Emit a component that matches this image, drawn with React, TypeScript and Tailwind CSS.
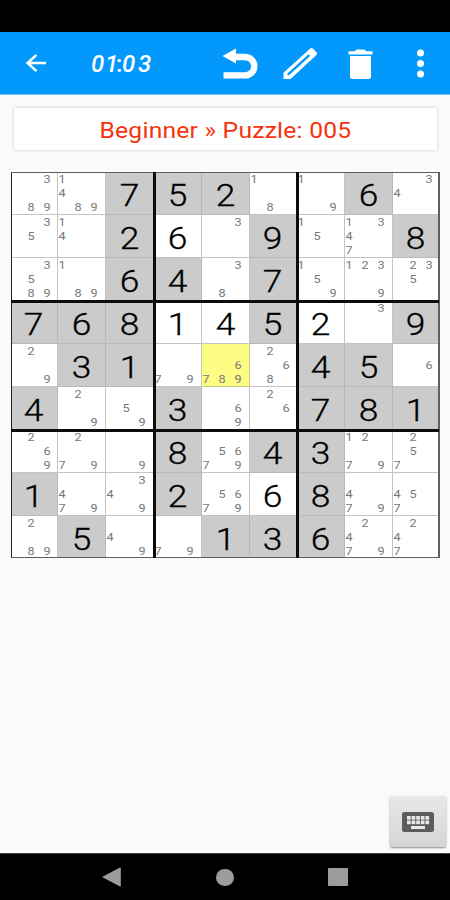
// Cell codes: "g7" is a given, "w6" an entered digit, "n389" pencil notes, "y…" notes in the selected cell.
const ROWS = [
  ["n389", "n1489", "g7", "g5", "g2", "n18", "n19", "g6", "n34"],
  ["n35", "n14", "g2", "w6", "n3", "g9", "n15", "n1347", "g8"],
  ["n3589", "n189", "g6", "g4", "n38", "g7", "n159", "n1239", "n235"],
  ["g7", "g6", "g8", "w1", "w4", "g5", "w2", "n3", "g9"],
  ["n29", "g3", "g1", "n79", "y6789", "n268", "g4", "g5", "n6"],
  ["g4", "n29", "n59", "g3", "n69", "n26", "g7", "g8", "g1"],
  ["n269", "n279", "n9", "g8", "n5679", "g4", "g3", "n1279", "n257"],
  ["g1", "n479", "n349", "g2", "n5679", "w6", "g8", "n479", "n457"],
  ["n289", "g5", "n49", "n79", "g1", "g3", "g6", "n2479", "n247"],
];

const BACKGROUNDS: Record<string, string> = {
  g: "bg-[#cbcbcb] border-[#b9b9b9]",
  w: "bg-white border-[#c4c4c4]",
  n: "bg-white border-[#c4c4c4]",
  y: "bg-[#fdfd83] border-[#c9c98a]",
};

function Cell({ code }: { code: string }) {
  const kind = code[0];
  const value = code.slice(1);
  const isDigit = kind === "g" || kind === "w";
  return (
    <div className={`overflow-hidden border-r border-b ${BACKGROUNDS[kind]}`}>
      {isDigit ? (
        <div className="flex h-full w-full items-center justify-center pt-[5px]">
          <span className="scale-x-[1.14] text-[31px] font-light leading-none text-black [-webkit-text-stroke:0.3px_black]">
            {value}
          </span>
        </div>
      ) : (
        <div className="-ml-[4px] grid w-[48px] grid-cols-[16px_16px_16px] grid-rows-[14px_14px_14px] pt-px">
          {["1", "2", "3", "4", "5", "6", "7", "8", "9"].map((n) => (
            <span
              key={n}
              className="flex scale-x-[1.15] items-center justify-center text-[11px] leading-[14px] text-[#777]"
            >
              {value.includes(n) ? n : ""}
            </span>
          ))}
        </div>
      )}
    </div>
  );
}

function Board() {
  return (
    <div className="relative ml-[11px] mt-[21px] h-[387px] w-[429px]">
      <div className="grid grid-cols-[47px_48px_48px_48px_48px_47px_48px_48px_47px] grid-rows-[43px_43px_43px_43px_43px_43px_43px_43px_42px]">
        {ROWS.flatMap((row, r) => row.map((code, c) => <Cell key={`${r}-${c}`} code={code} />))}
      </div>
      <div className="absolute left-0 top-0 h-[386px] w-[429px] border border-r-2 border-[#606060] border-l-[#222]" />
      <div className="absolute left-[142px] top-0 h-[386px] w-[3px] bg-[#0c0c0c]" />
      <div className="absolute left-[285px] top-0 h-[386px] w-[3px] bg-[#0c0c0c]" />
      <div className="absolute left-0 top-[127.5px] h-[3px] w-[428px] bg-[#0c0c0c]" />
      <div className="absolute left-0 top-[257px] h-[3px] w-[428px] bg-[#0c0c0c]" />
    </div>
  );
}

function Toolbar() {
  return (
    <header className="flex h-[63px] items-center border-b border-[#7cc4f8] bg-[#0399fc] text-white">
      <svg className="ml-[24px] h-[24px] w-[24px]" viewBox="0 0 24 24" fill="none" stroke="currentColor" strokeWidth="2.5">
        <path d="M22 12H4M12.5 3.8L3.5 12l9 8.2" />
      </svg>
      <div className="ml-[43px] flex w-[66px] items-center pt-px text-[24px] font-medium italic leading-none">
        <span className="w-[14px]">0</span>
        <span className="w-[11px] tracking-[-3px]">1</span>
        <span className="w-[6px] not-italic">:</span>
        <span className="w-[16px]">0</span>
        <span>3</span>
      </div>
      <svg className="ml-[64px] h-[34px] w-[38px]" viewBox="221 46 38 34">
        <path d="M233 57h12a9.3 9.2 0 0 1 0 18.4H223.500" fill="none" stroke="currentColor" strokeWidth="6.4" />
        <path d="M222.500 56L236 48.500V63.500Z" fill="currentColor" />
      </svg>
      <svg className="ml-[23px] h-[34px] w-[36px]" viewBox="282 46 36 34">
        <path
          d="M283.500 79v-6.300L310 48.700q1.500-1.200 3 0l3.700 3.800q1 1.200-.3 2.400L290.500 79Z"
          fill="currentColor"
        />
        <path d="M288.500 74.200L308.800 55.700" stroke="#0399fc" strokeWidth="2.4" strokeLinecap="round" />
      </svg>
      <svg className="ml-[29px] h-[34px] w-[26px]" viewBox="347 46 26 34" fill="currentColor">
        <path d="M348.500 51.200h6.200l2-1.700h7.600l2 1.700h6.200v3.300h-24zM350 56h21v20.500q0 2.500-2.500 2.500h-16q-2.500 0-2.500-2.500z" />
      </svg>
      <svg className="ml-[43px] h-[34px] w-[9px]" viewBox="416 46 9 34" fill="currentColor">
        <circle cx="420.500" cy="53" r="3.500" />
        <circle cx="420.500" cy="63.500" r="3.500" />
        <circle cx="420.500" cy="74" r="3.500" />
      </svg>
    </header>
  );
}

function KeyboardButton() {
  return (
    <button className="mr-[4px] mb-[6px] flex h-[51px] w-[56px] items-center justify-center rounded-[2px] bg-linear-to-b from-[#e8e8e8] to-[#d5d5d5] shadow-[0_1px_2px_rgba(0,0,0,0.45)]">
      <svg className="h-[20px] w-[32px]" viewBox="0 0 32 20">
        <rect width="32" height="20" rx="2.500" fill="#5c5c5c" />
        <g fill="#e8e8e8">
          {[5, 9.6, 14.2, 18.8, 23.4].map((x) => (
            <g key={x}>
              <rect x={x} y="4" width="3.700" height="3.700" />
              <rect x={x} y="8.500" width="3.700" height="3.700" />
            </g>
          ))}
          <rect x="9" y="14" width="14" height="3" />
        </g>
      </svg>
    </button>
  );
}

export default function App() {
  return (
    <div className="flex h-[900px] w-[450px] flex-col overflow-hidden bg-[#fafafa] font-['Roboto',sans-serif]">
      <div className="h-[32px] bg-black" />
      <Toolbar />
      <div className="ml-[14px] mr-[13px] mt-[13px] flex h-[42px] items-center justify-center bg-white shadow-[0_0_3px_rgba(0,0,0,0.2)]">
        <h1 className="scale-x-[1.12] whitespace-nowrap pt-[4px] text-[22px] leading-none tracking-[0.2px] text-[#f5330c]">
          Beginner » Puzzle: 005
        </h1>
      </div>
      <div className="h-px" />
      <Board />
      <div className="flex flex-1 items-end justify-end">
        <KeyboardButton />
      </div>
      <nav className="flex h-[47px] items-center justify-between border-t border-[#444] bg-black pl-[102px] pr-[102px] text-[#9c9c9c]">
        <svg className="h-[20px] w-[19px]" viewBox="0 0 19 20" fill="currentColor">
          <path d="M0 10L18 .5q.8-.2.8.6v17.800q0 .8-.8.6z" />
        </svg>
        <div className="h-[17px] w-[18px] rounded-full bg-[#9c9c9c]" />
        <div className="h-[18px] w-[20px] rounded-[1px] bg-[#9c9c9c]" />
      </nav>
    </div>
  );
}
